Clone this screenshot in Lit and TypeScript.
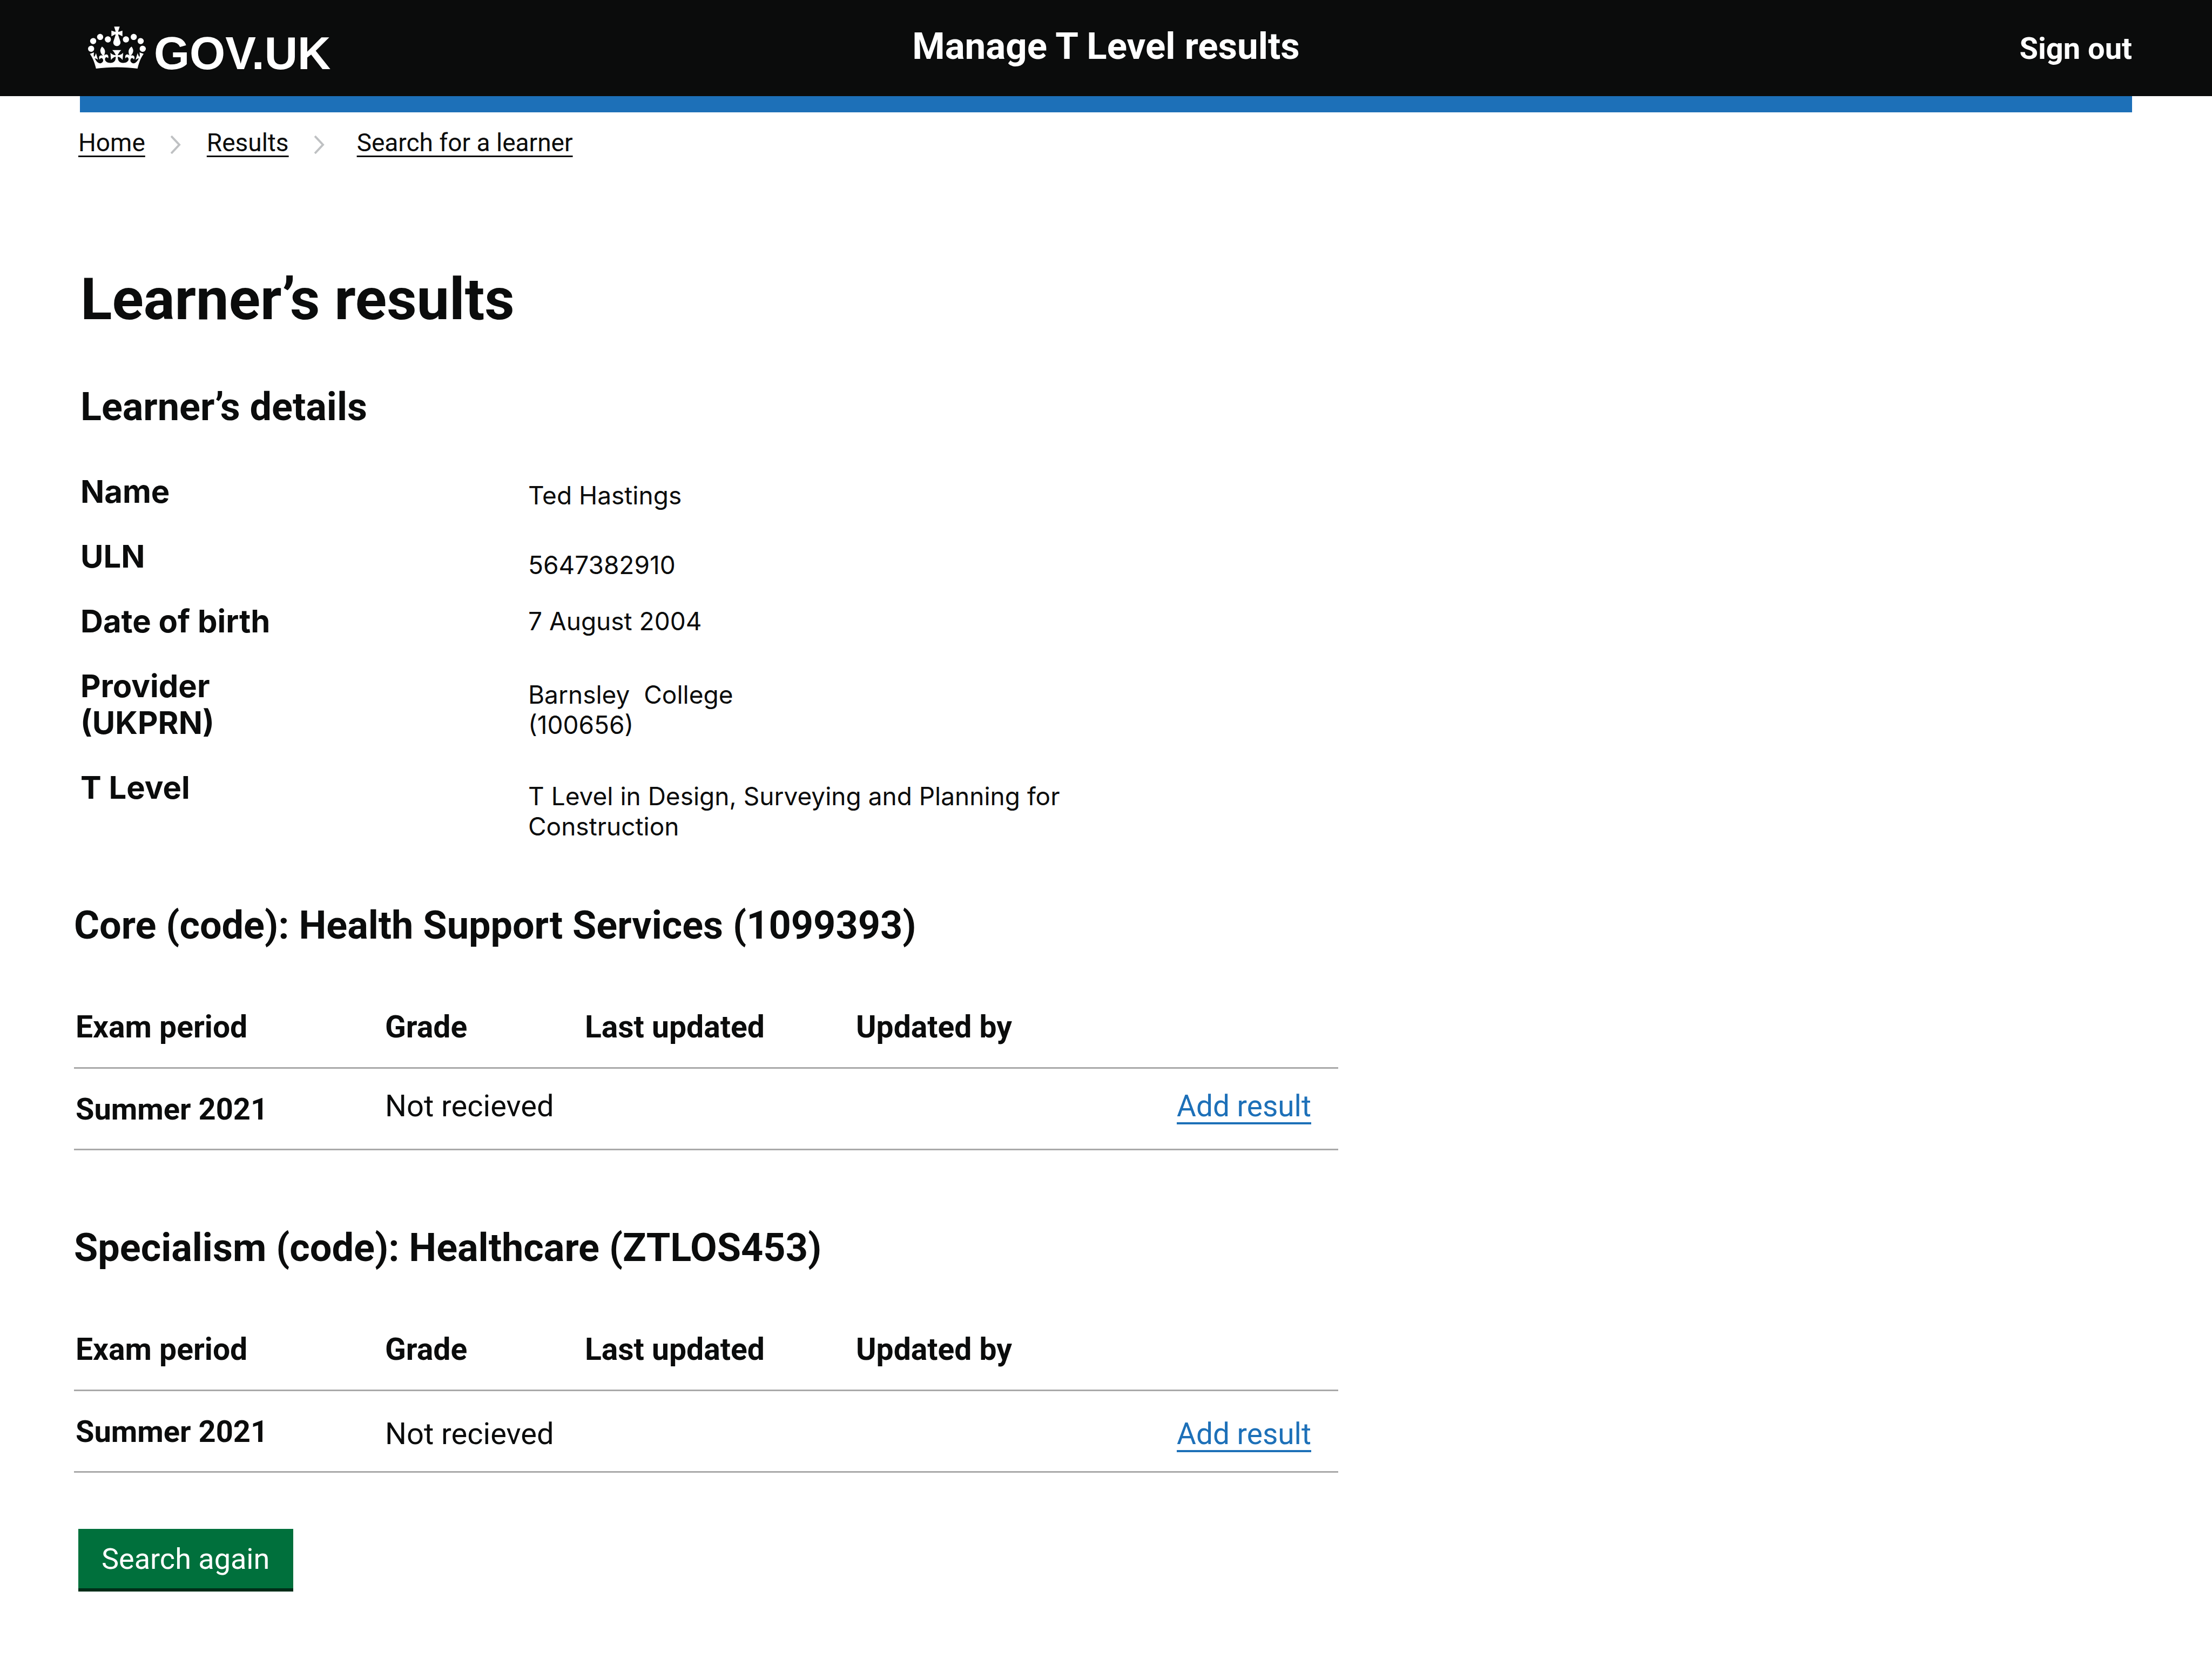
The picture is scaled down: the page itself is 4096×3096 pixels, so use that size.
import { LitElement, html, css } from "lit";
import { customElement, property } from "lit/decorators.js";
import { classMap } from "lit/directives/class-map.js";

interface Detail {
  label: string;
  value: string;
  drop: "high" | "mid" | "low";
}

interface ResultRow {
  period: string;
  grade: string;
  updated: string;
  updatedBy: string;
}

const DETAILS: Detail[] = [
  { label: "Name", value: "Ted Hastings", drop: "mid" },
  { label: "ULN", value: "5647382910", drop: "low" },
  { label: "Date of birth", value: "7 August 2004", drop: "high" },
  { label: "Provider\n(UKPRN)", value: "Barnsley \u00a0College\n(100656)", drop: "low" },
  {
    label: "T Level",
    value: "T Level in Design, Surveying and Planning for Construction",
    drop: "low",
  },
];

const PENDING: ResultRow[] = [
  { period: "Summer 2021", grade: "Not recieved", updated: "", updatedBy: "" },
];

@customElement("site-header")
export class SiteHeader extends LitElement {
  static styles = css`
    :host {
      display: block;
    }
    .bar {
      box-sizing: border-box;
      min-height: 178px;
      display: grid;
      grid-template-columns: 1fr auto 1fr;
      align-items: baseline;
      padding: 46px 148px 0;
      background: #0b0c0c;
    }
    .brand {
      align-self: start;
      display: flex;
      align-items: baseline;
      gap: 15px;
      padding: 3px 0 0 15px;
      color: #fff;
      font: 700 85px/80px "Liberation Sans", Arial, sans-serif;
      text-decoration: none;
    }
    .crown {
      width: 107px;
      height: 79px;
      fill: currentColor;
    }
    .service,
    .signout {
      color: #fff;
      font-weight: 700;
      text-decoration: none;
    }
    .service {
      font-size: 69px;
      line-height: 80px;
    }
    .signout {
      justify-self: end;
      font-size: 56px;
      line-height: 64px;
    }
    .stripe {
      height: 30px;
      margin: 0 148px;
      background: #1d70b8;
    }
  `;

  render() {
    return html`
      <header>
        <div class="bar">
          <a class="brand" href="#home">
            <svg class="crown" viewBox="0 0 132 97" aria-hidden="true">
              <path
                d="M25 30.2c3.5 1.5 7.7-.2 9.1-3.7 1.5-3.6-.2-7.8-3.9-9.2-3.6-1.4-7.6.3-9.1 3.9-1.4 3.5.3 7.5 3.9 9zM9 39.5c3.6 1.5 7.8-.2 9.2-3.7 1.5-3.6-.2-7.8-3.9-9.1-3.6-1.5-7.6.2-9.1 3.8-1.4 3.5.3 7.5 3.8 9zM4.4 57.2c3.5 1.5 7.7-.2 9.1-3.8 1.5-3.6-.2-7.7-3.9-9.1-3.5-1.5-7.6.3-9.1 3.8-1.4 3.5.3 7.6 3.9 9.1zm38.3-21.4c3.5 1.5 7.7-.2 9.1-3.8 1.5-3.6-.2-7.7-3.9-9.1-3.6-1.5-7.6.3-9.1 3.8-1.3 3.6.4 7.7 3.9 9.1zm64.4-5.6c-3.6 1.5-7.8-.2-9.1-3.7-1.5-3.6.2-7.8 3.8-9.2 3.6-1.4 7.7.3 9.2 3.9 1.3 3.5-.4 7.5-3.9 9zm15.9 9.3c-3.6 1.5-7.7-.2-9.1-3.7-1.5-3.6.2-7.8 3.7-9.1 3.6-1.5 7.7.2 9.2 3.8 1.5 3.5-.3 7.5-3.8 9zm4.7 17.7c-3.6 1.5-7.8-.2-9.2-3.8-1.5-3.6.2-7.7 3.9-9.1 3.6-1.5 7.7.3 9.2 3.8 1.3 3.5-.4 7.6-3.9 9.1zM89.3 35.8c-3.6 1.5-7.8-.2-9.2-3.8-1.4-3.6.2-7.7 3.9-9.1 3.6-1.5 7.7.3 9.2 3.8 1.4 3.6-.3 7.7-3.9 9.1zM69.7 17.7l8.9 4.7V9.3l-8.9 2.8c-.2-.3-.5-.6-.9-.9L72.4 0H59.6l3.5 11.2c-.3.3-.6.5-.9.9l-8.8-2.8v13.1l8.8-4.7c.3.3.6.7.9.9l-5 15.4v.1c-.2.8-.4 1.6-.4 2.4 0 4.1 3.1 7.5 7 8.1h.2c.3 0 .7.1 1 .1.4 0 .7 0 1-.1h.2c4-.6 7.1-4.1 7.1-8.1 0-.8-.1-1.7-.4-2.4V34l-5.1-15.4c.4-.2.7-.6 1-.9zM66 92.8c16.9 0 32.8 1.1 47.1 3.2 4-16.9 8.9-26.7 14-33.5l-9.6-3.4c1 4.9 1.1 7.2 0 10.2-1.5-1.4-3-4.3-4.2-8.7L108.6 76c2.8-2 5-3.2 7.5-3.3-4.4 9.4-10 11.9-13.6 11.2-4.3-.8-6.3-4.6-5.6-7.9 1-4.7 5.7-5.9 8-.5 4.3-8.7-3-11.4-7.6-8.8 7.1-7.2 7.9-13.5 2.1-21.1-8 6.1-8.1 12.3-4.5 20.8-4.7-5.4-12.1-2.5-9.5 6.2 3.4-5.2 7.9-2 7.2 3.1-.6 4.3-6.4 7.8-13.5 7.2-10.3-.9-10.9-8-11.2-13.8 2.5-.5 7.1 1.8 11 7.3L80.2 60c-4.1 4.4-8 5.3-12.3 5.4 1.4-4.4 8-11.6 8-11.6H55.5s6.4 7.2 7.9 11.6c-4.2-.1-8-1-12.3-5.4l1.4 16.4c3.9-5.5 8.5-7.7 10.9-7.3-.3 5.8-.9 12.8-11.1 13.8-7.2.6-12.9-2.9-13.5-7.2-.7-5 3.8-8.3 7.1-3.1 2.7-8.7-4.6-11.6-9.4-6.2 3.7-8.5 3.6-14.7-4.6-20.8-5.8 7.6-5 13.9 2.2 21.1-4.7-2.6-11.9.1-7.7 8.8 2.3-5.5 7.1-4.2 8.1.5.7 3.3-1.3 7.1-5.7 7.9-3.5.7-9-1.8-13.5-11.2 2.5.1 4.7 1.3 7.5 3.3l-4.7-15.4c-1.2 4.4-2.7 7.2-4.3 8.7-1.1-3-.9-5.3 0-10.2l-9.5 3.4c5 6.9 9.9 16.7 14 33.5 14.8-2.1 30.8-3.2 47.7-3.2z"
              ></path>
            </svg>
            <span>GOV.UK</span>
          </a>
          <a class="service" href="#service">Manage T Level results</a>
          <a class="signout" href="#sign-out">Sign out</a>
        </div>
        <div class="stripe"></div>
      </header>
    `;
  }
}

@customElement("results-section")
export class ResultsSection extends LitElement {
  @property() heading = "";
  @property({ type: Boolean }) raised = false;
  @property({ attribute: false }) rows: ResultRow[] = [];

  static styles = css`
    :host {
      display: block;
    }
    .heading {
      margin: 0 0 66px;
      font-size: 72px;
      line-height: 84px;
      font-weight: 700;
    }
    .table {
      width: 100%;
      max-width: 2341px;
      table-layout: fixed;
      border-spacing: 0;
      font-size: 56px;
      line-height: 64px;
      text-align: left;
    }
    .period {
      width: 576px;
    }
    .grade {
      width: 370px;
    }
    .updated {
      width: 502px;
    }
    .head,
    .name,
    .cell {
      padding: 0;
      border-bottom: 3px solid #a9a9a9;
      vertical-align: top;
    }
    .head {
      padding: 48px 0 42px;
      font-size: 57px;
    }
    .name {
      padding: 43px 0 41px;
    }
    .head:first-child,
    .name {
      padding-left: 3px;
    }
    .cell {
      padding: 47px 0 37px;
    }
    .raised .cell {
      padding: 37px 0 47px;
    }
    .table .action {
      padding-right: 50px;
      text-align: right;
    }
    .link {
      color: #1d70b8;
      font-size: 55px;
      text-decoration: underline;
      text-decoration-thickness: 4px;
      text-decoration-skip-ink: none;
      text-underline-offset: 11px;
    }
  `;

  render() {
    return html`
      <section>
        <h2 class="heading">${this.heading}</h2>
        <table class=${classMap({ table: true, raised: this.raised })}>
          <colgroup>
            <col class="period" />
            <col class="grade" />
            <col class="updated" />
            <col />
            <col />
          </colgroup>
          <thead>
            <tr>
              <th class="head" scope="col">Exam period</th>
              <th class="head" scope="col">Grade</th>
              <th class="head" scope="col">Last updated</th>
              <th class="head" scope="col">Updated by</th>
              <td class="head"></td>
            </tr>
          </thead>
          <tbody>
            ${this.rows.map(
              (row) => html`
                <tr>
                  <th class="name" scope="row">${row.period}</th>
                  <td class="cell">${row.grade}</td>
                  <td class="cell">${row.updated}</td>
                  <td class="cell">${row.updatedBy}</td>
                  <td class="cell action"><a class="link" href="#add-result">Add result</a></td>
                </tr>
              `,
            )}
          </tbody>
        </table>
      </section>
    `;
  }
}

@customElement("app-root")
export class AppRoot extends LitElement {
  static styles = css`
    :host {
      display: block;
      min-height: 100vh;
      background: #fff;
      color: #0b0c0c;
      font-family: Roboto, "Noto Sans", sans-serif;
    }
    .crumbs {
      display: flex;
      align-items: center;
      gap: 47px;
      margin: 28px 0 0;
      padding: 0 145px;
      list-style: none;
      font-size: 46px;
      line-height: 56px;
    }
    .crumb {
      display: flex;
      align-items: center;
      gap: 47px;
    }
    .crumb:last-child {
      padding-left: 12px;
    }
    .crumb-link {
      color: inherit;
      text-decoration: underline;
      text-decoration-thickness: 3px;
      text-decoration-skip-ink: none;
      text-underline-offset: 8px;
    }
    .chevron {
      width: 20px;
      height: 42px;
      fill: none;
      stroke: #bfc1c3;
      stroke-width: 4;
    }
    .main {
      padding: 200px 137px 148px;
    }
    .intro {
      padding-left: 12px;
    }
    .title {
      margin: 0 0 96px;
      font-size: 108px;
      line-height: 124px;
      font-weight: 700;
    }
    .subtitle {
      margin: 0 0 80px;
      font-size: 72px;
      line-height: 84px;
      font-weight: 700;
    }
    .details {
      margin: 0 0 114px;
      font-family: Inter, "Noto Sans", sans-serif;
    }
    .detail {
      display: grid;
      grid-template-columns: 829px minmax(0, 1040px);
      align-items: start;
    }
    .term,
    .value {
      margin: 0;
      white-space: pre-line;
    }
    .term {
      margin-bottom: 52px;
      font-size: 58px;
      line-height: 68px;
      font-weight: 700;
    }
    .value {
      font-size: 46px;
      line-height: 56px;
    }
    .high {
      padding-top: 6px;
    }
    .mid {
      padding-top: 13px;
    }
    .low {
      padding-top: 22px;
    }
    .results {
      display: grid;
      gap: 139px;
    }
    .search {
      margin: 104px 0 0 8px;
      padding: 24px 44px 22px 43px;
      border: 0;
      background: #00703c;
      box-shadow: 0 6px 0 #002d18;
      color: #fff;
      font: 400 54px/64px Roboto, "Noto Sans", sans-serif;
      cursor: pointer;
    }
  `;

  private chevron() {
    return html`<svg class="chevron" viewBox="0 0 20 42" aria-hidden="true">
      <path d="M1 9L16 25L1 41"></path>
    </svg>`;
  }

  render() {
    return html`
      <site-header></site-header>
      <nav aria-label="Breadcrumb">
        <ol class="crumbs">
          <li class="crumb"><a class="crumb-link" href="#home">Home</a>${this.chevron()}</li>
          <li class="crumb"><a class="crumb-link" href="#results">Results</a>${this.chevron()}</li>
          <li class="crumb"><a class="crumb-link" href="#search">Search for a learner</a></li>
        </ol>
      </nav>
      <main class="main">
        <div class="intro">
          <h1 class="title">Learner’s results</h1>
          <h2 class="subtitle">Learner’s details</h2>
          <dl class="details">
            ${DETAILS.map(
              (d) => html`<div class="detail">
                <dt class="term">${d.label}</dt>
                <dd class="value ${d.drop}">${d.value}</dd>
              </div>`,
            )}
          </dl>
        </div>
        <div class="results">
          <results-section
            raised
            heading="Core (code): Health Support Services (1099393)"
            .rows=${PENDING}
          ></results-section>
          <results-section
            heading="Specialism (code): Healthcare (ZTLOS453)"
            .rows=${PENDING}
          ></results-section>
        </div>
        <button class="search" type="button">Search again</button>
      </main>
    `;
  }
}
